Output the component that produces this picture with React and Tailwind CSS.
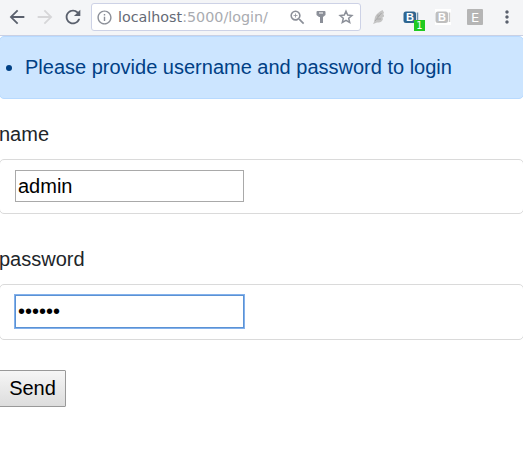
import React from "react";
import { MdArrowBack, MdArrowForward, MdRefresh, MdInfoOutline, MdZoomIn, MdMoreVert } from "react-icons/md";

function KeyIcon() {
  return (
    <svg className="ml-[9px] h-[14px] w-[10px] shrink-0" viewBox="0 0 10 14" fill="#8b8f98">
      <path fillRule="evenodd" d="M1.500 1h7a1 1 0 0 1 1 1v3L7 7v6H4V7H3L.5 5V2a1 1 0 0 1 1-1ZM3 2.500v1h4v-1Z" />
    </svg>
  );
}

function StarIcon() {
  return (
    <svg className="ml-[12px] size-[16px] shrink-0" viewBox="0 0 16 16" fill="none" stroke="#8b8f98" strokeWidth="1.500">
      <path d="M8 2.200l1.700 3.900 4.200.4-3.200 2.800 1 4.200L8 11.300l-3.700 2.200 1-4.200-3.200-2.800 4.200-.4Z" />
    </svg>
  );
}

function FeatherIcon() {
  return (
    <svg className="h-4 w-[14px] shrink-0" viewBox="0 0 14 16">
      <path d="M10.500 1C7 3 4 5 3 8l-1 5-1 2 1.500-.5L5 13.500c3 .5 6-1.500 6-4l-1-.5 2-1.500V5.500l-1 .2 1-2.200Z" fill="#c4c4c4" />
      <path d="M9.500 4 3 12M6 8V5.500M5 10h4" stroke="#a8a8a8" fill="none" />
    </svg>
  );
}

function BIcon({ color, shade }) {
  return (
    <svg className="h-4 w-4 shrink-0" viewBox="0 0 16 16">
      <rect x="0.500" y="2.500" width="12.500" height="11.500" rx="2.500" fill={color} />
      <path d="M14.500 3.500v9.500" stroke={shade} strokeWidth="1.500" />
      <text x="3" y="12.300" fill="#fff" fontSize="11" fontWeight="bold" fontFamily="Liberation Sans, sans-serif">B</text>
    </svg>
  );
}

function Toolbar() {
  return (
    <header className="flex h-[36px] items-center border-b border-[#c9d0e4] bg-[#f4f5f7] pb-px text-[#5a606d]">
      <MdArrowBack className="ml-[6px] size-[22px] shrink-0" />
      <MdArrowForward className="ml-[6px] size-[22px] shrink-0 text-[#d6d6d8]" />
      <MdRefresh className="ml-[6px] size-[22px] shrink-0" />
      <div className="ml-[7px] flex h-[28px] w-[270px] shrink-0 items-center rounded-[3px] border border-[#cdd2e6] bg-white text-[#8b8f98]">
        <MdInfoOutline className="ml-[4px] size-[17px] shrink-0" />
        <span className="ml-[5px] w-[170px] font-['DejaVu_Sans',sans-serif] text-[14.3px] whitespace-nowrap text-[#a9abb0]">
          <span className="text-[#656a76]">localhost</span>:5000/login/
        </span>
        <MdZoomIn className="size-[19px] shrink-0" />
        <KeyIcon />
        <StarIcon />
      </div>
      <div className="ml-[11px]"><FeatherIcon /></div>
      <div className="relative ml-[17px]">
        <BIcon color="#2e6590" shade="#6e93ad" />
        <span className="absolute top-[11px] left-[11px] flex h-[11px] w-[11px] items-center justify-center bg-[#20ca20] font-['DejaVu_Sans',sans-serif] text-[10px] leading-none text-white">1</span>
      </div>
      <div className="ml-[16px] bg-white"><BIcon color="#bfbfbf" shade="#cccccc" /></div>
      <span className="ml-[16px] flex size-4 items-center justify-center rounded-[1px] bg-[#b5b5b5] font-['DejaVu_Sans',sans-serif] text-[13px] leading-none text-white">E</span>
      <MdMoreVert className="ml-[14px] size-[20px] shrink-0" />
    </header>
  );
}

export default function App() {
  return (
    <div className="h-[472px] w-[523px] overflow-hidden bg-white font-['Liberation_Sans',Arial,sans-serif] text-[20px] leading-[30px] text-[#212529]">
      <Toolbar />
      <div className="-mx-px h-[63px] rounded-[5px] border border-[#b8daff] bg-[#cce5ff] pt-[15px] text-[#004085]">
        <ul className="list-disc pl-[25px]">
          <li>Please provide username and password to login</li>
        </ul>
      </div>
      <form>
        <label className="mt-[20px] -ml-px block" htmlFor="name">name</label>
        <div className="-mx-px mt-[10px] h-[55px] rounded-[5px] border border-[#dadada] pt-[10px] pl-[15px]">
          <input id="name" defaultValue="admin" className="block h-[32px] w-[229px] border border-[#a9a9a9] bg-white px-[2px] text-black outline-none" />
        </div>
        <label className="mt-[30px] -ml-px block" htmlFor="password">password</label>
        <div className="-mx-px mt-[10px] h-[56px] rounded-[5px] border border-[#dadada] pt-[10px] pl-[15px]">
          <input id="password" type="password" defaultValue="secret" className="block h-[33px] w-[229px] border border-[#5b92d4] bg-white px-[2px] text-black shadow-[0_0_0_1px_#83b1ec] outline-none" />
        </div>
        <button type="button" className="mt-[30px] -ml-px block h-[37px] w-[67px] rounded-[1px] border border-[#999] bg-linear-to-b from-[#f6f6f6] to-[#dddddd] pb-[2px] text-black">Send</button>
      </form>
    </div>
  );
}
